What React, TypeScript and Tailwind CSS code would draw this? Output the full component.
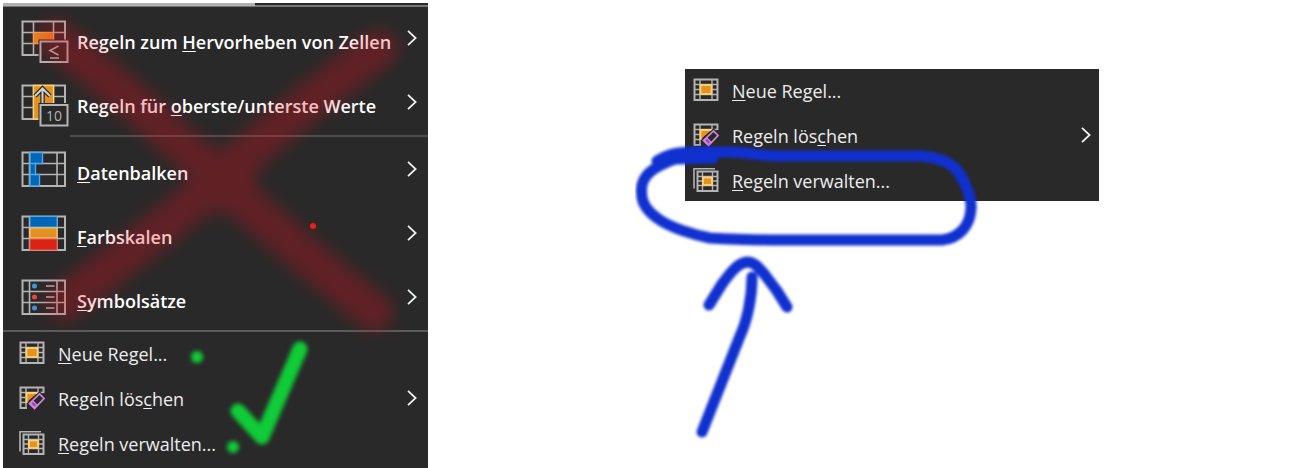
import type { ReactNode } from "react";

interface MenuEntryProps {
  icon: ReactNode;
  before?: string;
  accessKey: string;
  after: string;
  submenu?: boolean;
}

const GRID = "#b4b4b4";
const PANEL = "#292929";

function Chevron() {
  return (
    <svg className="h-4 w-[10px] shrink-0" viewBox="0 0 10 16" fill="none" stroke="#f0f0f0" strokeWidth="1.8">
      <path d="M1 0.8 L8.6 8 L1 15.2" />
    </svg>
  );
}

function LargeGrid({ columns, children }: { columns: [number, number]; children?: ReactNode }) {
  return (
    <svg className="h-11 w-12 shrink-0" viewBox="0 0 48 44" fill="none">
      <g stroke={GRID} strokeWidth="1.6">
        <path d={`M${columns[0]} 1 V34 M${columns[1]} 1 V34 M1 12.5 H44 M1 23.5 H44`} />
        <rect x="1.5" y="1.5" width="42.5" height="33.5" strokeWidth="2" />
      </g>
      {children}
    </svg>
  );
}

function HighlightIcon() {
  return (
    <LargeGrid columns={[12.5, 32.5]}>
      <rect x="12.5" y="12.5" width="20" height="11" fill="#e68c20" stroke="#f8a848" />
      <rect x="17.5" y="19.5" width="31" height="25" fill={PANEL} />
      <rect x="19.5" y="21.5" width="27" height="20.5" fill={PANEL} stroke={GRID} strokeWidth="2" />
      <path d="M37.5 26 L29 30.5 L37.5 35 M29 38 H38" stroke={GRID} strokeWidth="1.6" />
    </LargeGrid>
  );
}

function TopBottomIcon() {
  return (
    <LargeGrid columns={[12.5, 32.5]}>
      <rect x="12.5" y="1.5" width="20" height="33.5" fill="#e39220" stroke="#fbd078" strokeWidth="1.4" />
      <path d="M21.5 22 V4.5 M14 12 L21.5 4.5 L29 12" stroke={PANEL} strokeWidth="4.5" />
      <path d="M21.5 22 V4.5 M14 12 L21.5 4.5 L29 12" stroke="#d0d0d0" strokeWidth="2" />
      <rect x="17.5" y="19" width="31" height="25" fill={PANEL} />
      <rect x="19.5" y="21" width="27" height="20.5" fill={PANEL} stroke={GRID} strokeWidth="2" />
      <text x="33" y="36.5" textAnchor="middle" fill={GRID} fontSize="14" fontWeight="400" fontFamily="Open Sans, sans-serif">
        10
      </text>
    </LargeGrid>
  );
}

function DataBarsIcon() {
  return (
    <LargeGrid columns={[8.5, 36]}>
      <path d="M9 1.5 H21.5 V12.5 H14.5 V23.5 H18.5 V35 H9 Z" fill="#0067b8" stroke="#52a8e6" strokeWidth="1.4" />
      <path d="M9 12.5 H15 M9 23.5 H15" stroke="#52a8e6" strokeWidth="1.4" />
    </LargeGrid>
  );
}

function ColorScalesIcon() {
  return (
    <LargeGrid columns={[8.5, 36]}>
      <rect x="9" y="1.5" width="27" height="10.5" fill="#0067b8" stroke="#52a8e6" />
      <rect x="9" y="13" width="27" height="10" fill="#e39220" stroke="#fbd078" />
      <rect x="9" y="24" width="27" height="11" fill="#d92315" stroke="#f05a50" />
    </LargeGrid>
  );
}

function IconSetsIcon() {
  return (
    <LargeGrid columns={[8.5, 36]}>
      <circle cx="13.5" cy="7" r="2.5" fill="#3f97dc" />
      <circle cx="13.5" cy="18" r="2.5" fill="#ee4444" />
      <circle cx="13.5" cy="29" r="2.5" fill="#3f97dc" />
      <path d="M25 7 H33.5 M25 18 H33.5 M25 29 H33.5" stroke={GRID} strokeWidth="1.6" />
    </LargeGrid>
  );
}

function NewRuleIcon() {
  return (
    <svg className="h-6 w-[26px] shrink-0" viewBox="0 0 26 24" fill="none">
      <path d="M7 1 V22 M19 1 V22 M1 6.5 H25 M1 11.5 H25 M1 16.5 H25" stroke={GRID} strokeWidth="1.4" />
      <rect x="1.5" y="1.5" width="23" height="20.5" stroke={GRID} strokeWidth="2" />
      <rect x="7.5" y="7" width="11" height="9" fill="#e39220" stroke="#fbd078" strokeWidth="1.8" />
    </svg>
  );
}

function ClearRulesIcon() {
  return (
    <svg className="h-6 w-[26px] shrink-0" viewBox="0 0 26 24" fill="none">
      <path d="M7 1 V22 M19 1 V8 M1 6.5 H24 M1 11.5 H10 M1 16.5 H10" stroke={GRID} strokeWidth="1.4" />
      <path d="M24.5 7 V1.5 H1.5 V22 H8" stroke={GRID} strokeWidth="2" />
      <path d="M7 6.5 H19 L7 17 Z" fill="#e39220" />
      <path d="M7.5 17 V7 H19" stroke="#fbd078" strokeWidth="1.8" />
      <path d="M10.5 17.5 L20.5 8 L25 13 L15.5 23 Z" fill={PANEL} stroke={PANEL} strokeWidth="4" />
      <path d="M10.5 17.5 L20.5 8 L25 12.5 L15.5 22.5 Z" stroke="#cf86dc" strokeWidth="1.7" />
      <path d="M11.5 17.5 L14 15 L18 19 L15.5 21.5 Z" fill="#a83cba" stroke="#cf86dc" strokeWidth="1.2" />
    </svg>
  );
}

function ManageRulesIcon() {
  return (
    <svg className="h-6 w-[26px] shrink-0" viewBox="0 0 26 24" fill="none">
      <path d="M1 20.5 V0.8 H22" stroke={GRID} strokeWidth="1.6" />
      <path d="M9.5 4 V22 M19.5 4 V22 M4 8.5 H25 M4 13 H25 M4 17.5 H25" stroke={GRID} strokeWidth="1.4" />
      <rect x="4.5" y="3.5" width="20" height="19.5" stroke={GRID} strokeWidth="2" />
      <rect x="10" y="9.5" width="9" height="7.5" fill="#e39220" stroke="#fbd078" strokeWidth="1.8" />
    </svg>
  );
}

function Label({ before, accessKey, after }: { before?: string; accessKey: string; after: string }) {
  return (
    <span className="min-w-0 flex-1 whitespace-nowrap">
      {before}
      <span className="underline decoration-1 underline-offset-2 [text-decoration-skip-ink:none]">{accessKey}</span>
      {after}
    </span>
  );
}

function LargeEntry({ icon, before, accessKey, after }: MenuEntryProps) {
  return (
    <button type="button" role="menuitem" className="flex h-16 w-full items-start pt-[13px] pr-[11px] pl-[18px] text-left text-[18px] leading-6 font-semibold text-white">
      {icon}
      <span className="flex min-w-0 flex-1 pt-[10px] pl-2">
        <Label before={before} accessKey={accessKey} after={after} />
      </span>
      <span className="pt-[10px]">
        <Chevron />
      </span>
    </button>
  );
}

function SmallEntry({ icon, before, accessKey, after, submenu }: MenuEntryProps) {
  return (
    <button type="button" role="menuitem" className="flex h-[45px] w-full items-start gap-[13px] pt-[9px] text-left text-[18px] leading-[26px] text-[#ececec]">
      {icon}
      <Label before={before} accessKey={accessKey} after={after} />
      {submenu && (
        <span className="pt-1 leading-none">
          <Chevron />
        </span>
      )}
    </button>
  );
}

function RuleEntries() {
  return (
    <>
      <SmallEntry icon={<NewRuleIcon />} accessKey="N" after="eue Regel..." />
      <SmallEntry icon={<ClearRulesIcon />} before="Regeln lös" accessKey="c" after="hen" submenu />
      <SmallEntry icon={<ManageRulesIcon />} accessKey="R" after="egeln verwalten..." />
    </>
  );
}

// Red cross over the rule types, green tick beside the entries to use
function CrossAndTick() {
  return (
    <svg className="pointer-events-none absolute inset-0 h-[465px] w-[425px]" viewBox="0 0 425 465" fill="none" strokeLinecap="round" strokeLinejoin="round">
      <defs>
        <filter id="marker" x="-20%" y="-20%" width="140%" height="140%" colorInterpolationFilters="sRGB">
          <feGaussianBlur stdDeviation="8" />
        </filter>
        <filter id="pen" x="-50%" y="-50%" width="200%" height="200%" colorInterpolationFilters="sRGB">
          <feGaussianBlur stdDeviation="2.2" />
        </filter>
      </defs>
      <g opacity="0.29" filter="url(#marker)" stroke="#e60f1e" strokeWidth="38">
        <path d="M53 36 C95 68 130 97 162 127 C225 185 300 252 371 309" />
        <path d="M376 46 C335 75 290 110 222 170 C170 218 120 255 62 299" />
        <circle cx="222" cy="178" r="14" />
      </g>
      <g filter="url(#pen)">
        <path d="M235 408 L259 434 L297 346" stroke="#10cc38" strokeWidth="15" />
        <circle cx="194" cy="354" r="6" fill="#10cc38" />
        <circle cx="230" cy="444" r="6" fill="#10cc38" />
      </g>
      <circle cx="310" cy="223" r="3" fill="#ed1c1c" />
    </svg>
  );
}

function CircleAndArrow() {
  return (
    <svg className="pointer-events-none absolute top-[74px] -left-[50px] h-[300px] w-[345px]" viewBox="0 0 345 300" fill="none" strokeLinecap="round" strokeLinejoin="round">
      <defs>
        <filter id="brush" x="-10%" y="-10%" width="120%" height="120%" colorInterpolationFilters="sRGB">
          <feGaussianBlur stdDeviation="1.5" />
        </filter>
      </defs>
      <g filter="url(#brush)" stroke="#1030d0" strokeWidth="11">
        <path d="M22 18 C36 10 45 9 60 9 H95 C120 10 125 13 145 13 H285 C300 14 318 18 326 33 C332 45 337 55 336 66 C335 82 325 95 307 97 H150 C110 97 90 96 75 95 C60 92 35 85 22 75 C8 65 5 55 7 42 C10 28 25 22 40 16 L78 15" />
        <path d="M74 162 L87 141 C98 126 104 120 112 119 C120 119 124 125 130 132 L142 148 L152 164" />
        <path d="M117 134 C117 155 112 178 105 193 L67 289" />
      </g>
    </svg>
  );
}

export default function App() {
  return (
    <main className="flex items-start gap-[257px] overflow-hidden bg-white pt-[3px] pl-[3px] font-['Open_Sans','Noto_Sans',sans-serif]">
      <section className="relative w-full max-w-[425px] bg-[#292929] pb-px" role="menu" aria-label="Bedingte Formatierung">
        <div className="flex h-1 items-end">
          <div className="h-full w-[252px] border-b border-[#777777] bg-[#b0b0b0]" />
          <div className="h-[3px] flex-1 border-b-2 border-[#777777]" />
        </div>
        <LargeEntry icon={<HighlightIcon />} before="Regeln zum " accessKey="H" after="ervorheben von Zellen" />
        <LargeEntry icon={<TopBottomIcon />} before="Regeln für " accessKey="o" after="berste/unterste Werte" />
        <div className="mb-px ml-[67px] h-[2px] bg-[#4f4f4f]" />
        <LargeEntry icon={<DataBarsIcon />} accessKey="D" after="atenbalken" />
        <LargeEntry icon={<ColorScalesIcon />} accessKey="F" after="arbskalen" />
        <LargeEntry icon={<IconSetsIcon />} accessKey="S" after="ymbolsätze" />
        <div className="h-[2px] bg-[#5a5a5a]" />
        <div className="pr-[11px] pl-4">
          <RuleEntries />
        </div>
        <CrossAndTick />
      </section>

      <section className="relative mt-[66px] w-full max-w-[414px]" role="menu" aria-label="Regeln">
        <div className="bg-[#292929] pr-2 pl-2 [&>button:last-child]:h-[42px]">
          <RuleEntries />
        </div>
        <CircleAndArrow />
      </section>
    </main>
  );
}
